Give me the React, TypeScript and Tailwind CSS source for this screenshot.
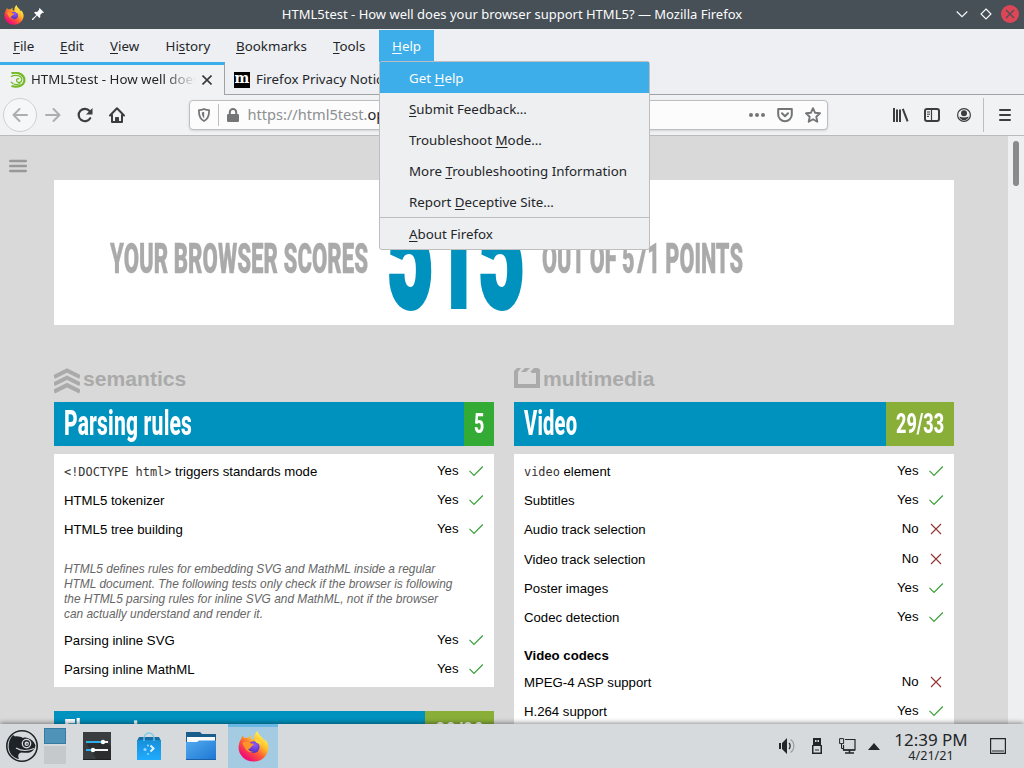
import { useLayoutEffect, useRef, useState, type ReactNode } from "react";

function Condensed({ text, width, className }: { text: string; width: number; className: string }) {
  const ref = useRef<HTMLSpanElement>(null);
  const [scale, setScale] = useState(0.5);
  useLayoutEffect(() => {
    if (ref.current) setScale(width / ref.current.offsetWidth);
  }, [width, text]);
  return (
    <div className="shrink-0" style={{ width }}>
      <span
        ref={ref}
        className={"inline-block origin-left whitespace-nowrap font-[Roboto,sans-serif] [-webkit-text-stroke-color:currentColor] " + className}
        style={{ transform: `scaleX(${scale})` }}
      >
        {text}
      </span>
    </div>
  );
}

/* Renders a label whose accelerator letter is marked with an underscore. */
function Accel({ label }: { label: string }) {
  const i = label.indexOf("_");
  return (
    <span className="whitespace-pre">
      {label.slice(0, i)}
      <span className="underline decoration-1 underline-offset-2">{label[i + 1]}</span>
      {label.slice(i + 2)}
    </span>
  );
}

function FirefoxLogo({ size }: { size: number }) {
  return (
    <svg width={size} height={size} viewBox="0 0 32 32" className="shrink-0">
      <defs>
        <linearGradient id="ffa" x1="0.85" y1="0.1" x2="0.2" y2="0.95">
          <stop offset="0.05" stopColor="#fff44f" />
          <stop offset="0.35" stopColor="#ffb52b" />
          <stop offset="0.6" stopColor="#ff5a36" />
          <stop offset="0.9" stopColor="#f0136f" />
        </linearGradient>
        <radialGradient id="ffb" cx="0.6" cy="0.3" r="0.8">
          <stop offset="0" stopColor="#9059ff" />
          <stop offset="1" stopColor="#4a2bb8" />
        </radialGradient>
      </defs>
      <path
        d="M20 0c.8 2.600 2.500 4.500 4.300 6.300 1.700 1.700 2.500 3.200 2.800 4.200.6-.4.5-1.700.4-2.300C30 11 31.500 14 31.400 17.200 31.200 25.300 24.500 31.500 16 31.500S.6 25 .6 17c0-3.600 1.200-6.800 3.100-9.500.1-1.200.5-2.300 1.200-3.100.3 1.200.8 2 1.400 2.700 1.300-.3 2.700-.2 3.800.2 1.200-1.700 2.700-2.600 4.200-3-1 1.200-1.200 2.500-.9 3.600 1 .9 1.900.9 2.900 1.100C16.300 5.500 17.700 2 20 0z"
        fill="url(#ffa)"
      />
      <circle cx="16.300" cy="16.600" r="6" fill="url(#ffb)" />
      <path
        d="M4.500 12c2-1.400 5-1.100 7.300.2 1.200.7 3.200.7 4.300 1.200.3 1.300-1.200 2.100-2.500 2.700-.4 2.100-1.800 2.600-3.400 2.500.7 1.700 3 2.900 5.600 2.700-5.500 2.500-9.300-3.800-11.300-9.300z"
        fill="#ff9428"
      />
      <path d="M17.500 8.500c3.500-.3 6.800 2.500 6.900 6.600-1-2-2.700-2.700-4.500-2.500-1.700-.9-2.300-2.400-2.400-4.100z" fill="#ffd83c" />
    </svg>
  );
}

function TitleBar() {
  return (
    <div className="flex h-[29px] items-center bg-[#475057] text-[#fcfcfc]">
      <div className="flex w-[75px] shrink-0 items-center gap-[8px] pl-1">
        <FirefoxLogo size={20} />
        <svg width="12" height="12" viewBox="0 0 12 12" className="-mt-[2px]" fill="#fcfcfc">
          <path d="M7.600 0 12 4.400l-1 .5-.6-.2-2.200 2.300.1 1.900-.9 1-2.400-2.400L1 12H0v-.9l4.400-4L2.100 4.800l1-1 1.900.2 2.200-2.300L7 1z" />
        </svg>
      </div>
      <div className="flex-1 text-center text-[13px] whitespace-nowrap">
        HTML5test - How well does your browser support HTML5? — Mozilla Firefox
      </div>
      <div className="flex w-[75px] shrink-0 items-center justify-end gap-[12px] pr-[5px] pb-px">
        <svg width="12" height="12" viewBox="0 0 12 12" fill="none" stroke="#fcfcfc" strokeWidth="1.100">
          <path d="M.7 3.500 6 8.700l5.300-5.200" />
        </svg>
        <svg width="12" height="12" viewBox="0 0 12 12" fill="none" stroke="#fcfcfc" strokeWidth="1.100" className="-mr-[3px]">
          <path d="M6 1 11 6 6 11 1 6z" />
        </svg>
        <svg width="18" height="18" viewBox="0 0 18 18">
          <circle cx="9" cy="9" r="9" fill="#dd4657" />
          <path d="m5 5 8 8M13 5l-8 8" stroke="#475057" strokeWidth="1.100" />
        </svg>
      </div>
    </div>
  );
}

const helpMenu = [
  "Get _Help",
  "_Submit Feedback…",
  "Troubleshoot _Mode…",
  "More _Troubleshooting Information",
  "Report _Deceptive Site…",
];

function MenuBar() {
  return (
    <div className="flex h-[33px] items-start bg-[#eeeff2] pt-px text-[13.330px] leading-[32px] text-[#232629]">
      <div className="w-[47px] pl-[13px]"><Accel label="_File" /></div>
      <div className="w-[50px] pl-[13px]"><Accel label="_Edit" /></div>
      <div className="w-[56px] pl-[13px]"><Accel label="_View" /></div>
      <div className="w-[70px] pl-[12.500px]"><Accel label="Hi_story" /></div>
      <div className="w-[97px] pl-[13px]"><Accel label="_Bookmarks" /></div>
      <div className="w-[59px] pl-[13px]"><Accel label="_Tools" /></div>
      <div className="relative h-8 w-[55px] bg-[#3daee9] pl-[13px] text-[#fcfcfc]">
        <Accel label="_Help" />
        <div className="absolute top-[31px] left-0 z-20 w-[271px] rounded-[3px] border border-[#bcbebf] bg-[#eeeff1] text-[#232629] leading-[33px]">
          {helpMenu.map((m, i) => (
            <div key={m} className={i === 0 ? "h-[31px] bg-[#3daee9] pl-[29px] text-[#fcfcfc]" : "h-[31px] pl-[29px]"}>
              <Accel label={m} />
            </div>
          ))}
          <div className="h-8 border-t border-[#bcbebf] pl-[29px]">
            <Accel label="_About Firefox" />
          </div>
        </div>
      </div>
    </div>
  );
}

function TabStrip() {
  return (
    <div className="flex h-[33px] bg-[#eeeff2] text-[13.300px] text-[#232629]">
      <div className="flex w-[225px] shrink-0 items-center border-t-[3px] border-r border-t-[#3daee9] border-r-[#a0a2a4] bg-[#f1f2f4] pl-[10px]">
        <svg width="16" height="16" viewBox="0 0 16 16" fill="none" stroke="#73ba25">
          <path d="M1.500 1.200C8-.5 14.400 2.500 14.400 8S8 16 1.500 14" strokeWidth="2.200" />
          <path d="M1 4.800c4-2.500 10.800-1.500 10.800 2.700 0 3.200-3.800 3.900-5 1.700-1-2 1-3.300 2.300-2M1 9.800c2 2.700 6 3.300 9.500 1.700" strokeWidth="1.300" />
        </svg>
        <div className="ml-[5px] w-[165px] overflow-hidden whitespace-nowrap [mask-image:linear-gradient(to_right,black_80%,transparent)]">
          HTML5test - How well does your browser
        </div>
        <svg width="10" height="10" viewBox="0 0 10 10" className="ml-[6px]" stroke="#36393b" strokeWidth="1.600">
          <path d="m.5.5 9 9M9.500.5l-9 9" />
        </svg>
      </div>
      <div className="flex flex-1 items-center border-b border-[#a0a2a4] pt-[3px] pl-[9px]">
        <div className="flex h-4 w-4 items-center justify-center bg-black pb-[3px] font-['DejaVu_Serif',serif] text-[14px] leading-none font-bold text-white">
          m
        </div>
        <div className="ml-[6px] w-[150px] overflow-hidden whitespace-nowrap">Firefox Privacy Notice</div>
      </div>
    </div>
  );
}

function NavBar() {
  return (
    <div className="flex h-[41px] items-center border-b border-[#b9babc] bg-[#f1f2f4] pl-[3px]">
      <div className="flex h-[34px] w-[34px] items-center justify-center rounded-full border border-[#cfd0d2] bg-[#f6f7f8]">
        <svg width="16" height="16" viewBox="0 0 16 16" fill="none" stroke="#acaeb0" strokeWidth="2" strokeLinecap="round" strokeLinejoin="round">
          <path d="M15 8H1.500M7.500 2 1.500 8l6 6" />
        </svg>
      </div>
      <svg width="16" height="16" viewBox="0 0 16 16" className="ml-2" fill="none" stroke="#acaeb0" strokeWidth="2" strokeLinecap="round" strokeLinejoin="round">
        <path d="M1 8h13.500M8.500 2l6 6-6 6" />
      </svg>
      <svg width="16" height="16" viewBox="0 0 16 16" className="ml-4" fill="none" stroke="#3b3e41" strokeWidth="2.200">
        <path d="M13.200 11.200A6.200 6.200 0 1 1 12.600 4" strokeLinecap="round" />
        <path d="M15.500 1v6.500H9z" fill="#3b3e41" stroke="none" />
      </svg>
      <svg width="16" height="16" viewBox="0 0 16 16" className="ml-4" fill="none" stroke="#3b3e41" strokeWidth="2" strokeLinejoin="round" strokeLinecap="round">
        <path d="M1 8.500 8 1.300l7 7.200M3 8v7h10V8" />
        <path d="M6.500 15v-4.500h3V15z" fill="#3b3e41" strokeWidth="1" />
      </svg>
      <div className="ml-16 flex h-[30px] w-[639px] items-center rounded-[4px] border border-[#bcbebf] bg-[#fcfcfc] pl-2 text-[14.600px] text-[#232629] shadow-sm">
        <svg width="12" height="14" viewBox="0 0 13 15" fill="none" stroke="#737577" strokeWidth="1.900">
          <path d="M6.500 1c2 .9 3.700 1.200 5.500 1.200C12.200 8 10.500 12 6.500 14 2.500 12 .8 8 1 2.200 2.800 2.200 4.500 1.900 6.500 1z" strokeLinejoin="round" />
          <path d="M6.700 4v7C4.800 9.500 4.200 7.500 4.100 4.700z" fill="#737577" stroke="none" />
        </svg>
        <div className="ml-[8px] h-[22px] w-px bg-[#bcbebf]" />
        <svg width="12" height="14" viewBox="0 0 12 14" className="ml-2" fill="#737577">
          <rect y="6" width="12" height="8" rx="1.200" />
          <path d="M2.800 7V4.200a3.200 3.200 0 0 1 6.400 0V7" fill="none" stroke="#737577" strokeWidth="2" />
        </svg>
        <div className="ml-[8.500px] flex-1 whitespace-nowrap">
          <span className="text-[#8e9092]">https://html5test.</span>opera.com
        </div>
        <svg width="16" height="4" viewBox="0 0 16 4" fill="#737577">
          <circle cx="2" cy="2" r="2" /><circle cx="8" cy="2" r="2" /><circle cx="14" cy="2" r="2" />
        </svg>
        <svg width="16" height="16" viewBox="0 0 16 16" className="ml-3" fill="none" stroke="#737577" strokeWidth="2" strokeLinejoin="round" strokeLinecap="round">
          <path d="M1.200 2h13.600v5.500a6.800 6.800 0 0 1-13.600 0z" />
          <path d="m5 6.200 3 3 3-3" />
        </svg>
        <svg width="16" height="16" viewBox="0 0 16 16" className="mr-[6px] ml-3" fill="none" stroke="#737577" strokeWidth="1.900" strokeLinejoin="round">
          <path d="m8 1.200 2 4.500 5 .6-3.700 3.400 1 5L8 12.200l-4.300 2.500 1-5L1 6.300l5-.6z" />
        </svg>
      </div>
      <svg width="16" height="14" viewBox="0 0 16 14" className="ml-[65px]" fill="#3b3e41">
        <path d="M0 0h2v14H0zM3 1.500h2V14H3zM6 1.500h2V14H6z" />
        <path d="M9.800.8 14.600 13.400" stroke="#3b3e41" strokeWidth="2" />
      </svg>
      <svg width="16" height="14" viewBox="0 0 16 14" className="ml-[15px]" fill="none" stroke="#3b3e41">
        <rect x="1" y="1" width="14" height="12" rx="2" strokeWidth="2" />
        <path d="M7.500 1v12" strokeWidth="1.200" />
        <path d="M3 4h3M3 6.200h3M3 8.400h2" />
      </svg>
      <svg width="14" height="14" viewBox="0 0 14 14" className="ml-[17px]">
        <circle cx="7" cy="7" r="6.400" fill="none" stroke="#3b3e41" strokeWidth="1.200" />
        <circle cx="7" cy="5.200" r="3" fill="#3b3e41" />
        <path d="M2.300 8.600c3 1.300 6.400 1.300 9.400 0-.6 2-2.300 3.700-4.700 3.700S3 10.600 2.300 8.600z" fill="#3b3e41" />
      </svg>
      <div className="ml-3 h-[34px] w-px bg-[#bcbebf]" />
      <svg width="12" height="12" viewBox="0 0 12 12" className="ml-[15px]" stroke="#3b3e41" strokeWidth="2" strokeLinecap="round">
        <path d="M1 1h10M1 6h10M1 11h10" />
      </svg>
    </div>
  );
}

function Row({ children, ok }: { children: ReactNode; ok: boolean }) {
  return (
    <div className="flex h-[29.200px] items-center justify-between pr-[10px] pl-[10px] text-[13.200px] leading-[15px] text-black">
      <div className="pt-px">{children}</div>
      <div className="flex items-center">
        <span className="pb-px">{ok ? "Yes" : "No"}</span>
        {ok ? (
          <svg width="16" height="14" viewBox="0 0 16 14" className="ml-[9.500px]" fill="none" stroke="#3a9e3a" strokeWidth="1.200">
            <path d="M1.500 6.800 6 11.300 14.800 2.500" />
          </svg>
        ) : (
          <svg width="16" height="14" viewBox="0 0 16 14" className="ml-[9.500px]" fill="none" stroke="#943232" strokeWidth="1.100">
            <path d="m3 2 10 10M13 2 3 12" />
          </svg>
        )}
      </div>
    </div>
  );
}

function SectionHeader({ title, width, score, scoreWidth, full }: { title: string; width: number; score: string; scoreWidth: number; full?: boolean }) {
  return (
    <div className="flex h-11 justify-between bg-[#0092bf] pl-[10px] text-white">
      <Condensed text={title} width={width} className="text-[35px] leading-[43px] font-extrabold tracking-[0.3px]" />
      <div className={full ? "bg-[#34ab34] px-[10px]" : "bg-[#8aaf38] px-[10px]"}>
        <Condensed text={score} width={scoreWidth} className="text-[28.500px] leading-[43px] font-extrabold" />
      </div>
    </div>
  );
}

function Page() {
  return (
    <div className="flex h-[588px] overflow-hidden bg-[#d9d9d9] font-['Liberation_Sans',Arial,sans-serif]">
      <div className="w-[54px] shrink-0 pt-[23px] pl-[9px]">
        <svg width="18" height="14" viewBox="0 0 18 14" stroke="#999" strokeWidth="2.400" strokeLinecap="round">
          <path d="M1.200 2h15.600M1.200 7h15.600M1.200 12h15.600" />
        </svg>
      </div>
      <div className="w-[900px] shrink-0 pt-11">
        <div className="flex h-[145px] items-start bg-white pl-14 text-[#aaa]">
          <Condensed text="YOUR BROWSER SCORES" width={258} className="mt-[54px] text-[42px] leading-[50px] font-black [-webkit-text-stroke-width:0.4px]" />
          <div className="ml-[19px] text-[#0092bf]">
            <Condensed text="515" width={137} className="text-[158px] leading-[147px] font-black tracking-[-2px] [-webkit-text-stroke-width:4px]" />
          </div>
          <div className="ml-[18px]">
            <Condensed text="OUT OF 571 POINTS" width={201} className="mt-[54px] text-[42px] leading-[50px] font-black [-webkit-text-stroke-width:0.4px]" />
          </div>
        </div>
        <div className="flex gap-5 pt-[41px]">
          <div className="w-[440px]">
            <div className="flex h-9 items-start text-[21.120px] leading-[26px] font-bold text-[#aaa]">
              <svg width="26" height="26" viewBox="0 0 26 26" className="mt-[2px] mr-[3px]" fill="none" stroke="#aaa" strokeWidth="4">
                <path d="M0 9 13 2.500 26 9M0 16.300 13 9.800l13 6.500M0 23.600l13-6.500 13 6.500" />
              </svg>
              semantics
            </div>
            <SectionHeader title="Parsing rules" width={128} score="5" scoreWidth={10} full />
            <div className="mt-2 h-[233px] bg-white pt-[2.500px]">
              <Row ok><span className="font-['DejaVu_Sans_Mono',monospace] text-[11.900px] text-[#333]">&lt;!DOCTYPE html&gt;</span> triggers standards mode</Row>
              <Row ok>HTML5 tokenizer</Row>
              <Row ok>HTML5 tree building</Row>
              <div className="mt-[18px] mb-[3px] pl-[10px] text-[11.900px] leading-[15px] whitespace-nowrap text-[#666] italic">
                HTML5 defines rules for embedding SVG and MathML inside a regular<br />
                HTML document. The following tests only check if the browser is following<br />
                the HTML5 parsing rules for inline SVG and MathML, not if the browser<br />
                can actually understand and render it.
              </div>
              <Row ok>Parsing inline SVG</Row>
              <Row ok>Parsing inline MathML</Row>
            </div>
            <div className="mt-6">
              <SectionHeader title="Elements" width={86} score="28/30" scoreWidth={49} />
            </div>
          </div>
          <div className="w-[440px]">
            <div className="flex h-9 items-start text-[21.120px] leading-[26px] font-bold text-[#aaa]">
              <svg width="26" height="20" viewBox="0 0 26 20" className="mt-[2px] mr-[3px]" fill="#aaa">
                <path d="M3 0h4L4 4v12h18V5h-5l4-4h5v19H0V3zM11 0h5l-4 4H7zM20 0h5l-4 4h-5z" />
              </svg>
              multimedia
            </div>
            <SectionHeader title="Video" width={53} score="29/33" scoreWidth={48} />
            <div className="mt-2 bg-white pt-[2.500px]">
              <Row ok><span className="font-['DejaVu_Sans_Mono',monospace] text-[11.900px] text-[#333]">video</span> element</Row>
              <Row ok>Subtitles</Row>
              <Row ok={false}>Audio track selection</Row>
              <Row ok={false}>Video track selection</Row>
              <Row ok>Poster images</Row>
              <Row ok>Codec detection</Row>
              <div className="h-[36px] pt-[16px] pl-[10px] text-[13.200px] leading-[15px] font-bold text-black">Video codecs</div>
              <Row ok={false}>MPEG-4 ASP support</Row>
              <Row ok>H.264 support</Row>
            </div>
          </div>
        </div>
      </div>
      <div className="w-[54px] shrink-0" />
      <div className="flex w-4 justify-center bg-[#eeeff1] pt-[5px]">
        <div className="h-[45px] w-[6px] rounded-full bg-[#888a8c]" />
      </div>
    </div>
  );
}

function TaskBar() {
  return (
    <div className="relative flex h-11 items-center bg-[#d7dadc] text-[#232629] shadow-[0_-1px_5px_rgba(0,0,0,0.45)]">
      <svg width="32" height="32" viewBox="0 0 32 32" className="ml-[6px]">
        <circle cx="16" cy="16" r="15.200" fill="none" stroke="#1d2326" strokeWidth="1.600" />
        <path d="M7 5l2 1.500c3-.5 6 .5 8 1.500 1.500-.6 3.500-.6 5 .2 3.500.8 6 3.300 7.500 7.300-.5 3-2 5-4.500 6.500-3 1.300-6.500.8-9.500.6-2.500.2-3.500 2-3.200 4.500L13 29C7 28 3 23 2.600 17 2.500 12 4 8 7 5z" fill="#1d2326" />
        <circle cx="20.500" cy="13.600" r="4.200" fill="none" stroke="#d7dadc" strokeWidth="1.300" />
        <circle cx="20.700" cy="13.800" r="2.200" fill="#d7dadc" />
        <path d="M20 14h2" stroke="#1d2326" strokeWidth="1.200" />
        <path d="M10 18c5 3 12 3 18 .5" fill="none" stroke="#d7dadc" strokeWidth="1.200" />
      </svg>
      <div className="ml-[6px] flex h-9 w-[22px] flex-col gap-[2px]">
        <div className="h-4 border border-[#357ba4] bg-[#4f93b8]" />
        <div className="h-[18px] bg-[#c5c9cc]" />
      </div>
      <svg width="28" height="28" viewBox="0 0 28 28" className="ml-[17px]">
        <path d="M0 0h28v28H0z" fill="#3a3d40" />
        <path d="M4 12 14 28h14V14l-8-6z" fill="#2b2d2f" />
        <path d="M20 10h5M10 18h15" stroke="#f5f5f5" strokeWidth="2" />
        <path d="M3 10h17M3 18h7" stroke="#2faeea" strokeWidth="2" />
        <circle cx="20" cy="10" r="2.200" fill="#fff" /><circle cx="10" cy="18" r="2.200" fill="#fff" />
        <path d="M0 27.500h28" stroke="#1d1f20" />
      </svg>
      <svg width="26" height="29" viewBox="0 0 26 29" className="ml-[25px]">
        <defs><linearGradient id="bag" x2="0" y2="1"><stop stopColor="#168fd8" /><stop offset="1" stopColor="#20abff" /></linearGradient></defs>
        <path d="M1 9 3 5h20l2 4z" fill="#176da7" />
        <path d="M1 8h24v20H1z" fill="url(#bag)" />
        <path d="M8 9V6a5 5 0 0 1 10 0v3" fill="none" stroke="#77cce9" strokeWidth="1.300" />
        <path d="m14.500 13.500 3 3-3 3" fill="none" stroke="#d9f2ff" strokeWidth="2" />
        <g fill="#8fd6ff"><circle cx="12" cy="13.500" r="1.100" /><circle cx="9" cy="17.500" r="1.600" /><circle cx="12" cy="22" r="1.100" /></g>
      </svg>
      <svg width="30" height="28" viewBox="0 0 30 28" className="ml-6">
        <defs><linearGradient id="fold" x2="1" y2="1"><stop stopColor="#54a9ef" /><stop offset="1" stopColor="#1b77d3" /></linearGradient></defs>
        <path d="M0 0h14l2 2h14v20H0z" fill="#1a5d8c" />
        <path d="M1 5h28v8H1z" fill="#fafafa" />
        <path d="M0 10h11l2-1.500h17V28H0z" fill="url(#fold)" />
        <path d="M0 27.500h30" stroke="#1a5fa8" />
      </svg>
      <div className="ml-3 flex h-11 w-[50px] items-center justify-center border-t-[3px] border-[#69b7e3] bg-[#a4cbe2] pb-[3px]">
        <FirefoxLogo size={31} />
      </div>
      <svg width="16" height="16" viewBox="0 0 16 16" className="ml-[501px]" fill="#232629">
        <path d="M0 5h2v6H0zM3 5l5-5v16l-5-5z" />
        <path d="M10 5c1.500 1.500 1.500 4.500 0 6" fill="none" stroke="#232629" strokeWidth="1.300" />
        <path d="M11.500 1.500c4.500 3 4.500 10 0 13" fill="none" stroke="#999da0" strokeWidth="1.200" />
      </svg>
      <svg width="10" height="16" viewBox="0 0 10 16" className="ml-[17px]">
        <path d="M1 0h8v7h1v9H0V7h1z" fill="#232629" />
        <path d="M3 2h1.500v2H3zM5.500 2H7v2H5.500zM1.500 8h7v6.500h-7z" fill="#d7dadc" />
        <path d="M3 12h4" stroke="#232629" />
      </svg>
      <svg width="17" height="16" viewBox="0 0 17 16" className="ml-[17px]" fill="none" stroke="#232629">
        <path d="M6 1.500h10v10.500H4.500V7" strokeWidth="1.200" />
        <path d="M.6.6h4v5h-4zM2.500 6v4.500h2" />
        <path d="M4 12h12M6 15h9M10.500 12v3" strokeWidth="1.600" />
      </svg>
      <svg width="12" height="7" viewBox="0 0 12 7" className="ml-[12px]" fill="#232629"><path d="M6 0 12 7H0z" /></svg>
      <div className="ml-[10px] flex w-[82px] flex-col items-center whitespace-nowrap">
        <div className="text-[17px] leading-[20px]">12:39 PM</div>
        <div className="text-[12.600px] leading-[12px]">4/21/21</div>
      </div>
      <svg width="16" height="16" viewBox="0 0 16 16" className="ml-[18px]" fill="none" stroke="#232629" strokeWidth="1.200">
        <path d="M.6.6h14.800v14.800H.6zM2 13h12" />
      </svg>
    </div>
  );
}

export default function App() {
  return (
    <div className="flex h-[768px] w-[1024px] flex-col overflow-hidden font-['Noto_Sans',sans-serif]">
      <TitleBar />
      <MenuBar />
      <TabStrip />
      <NavBar />
      <Page />
      <TaskBar />
    </div>
  );
}
